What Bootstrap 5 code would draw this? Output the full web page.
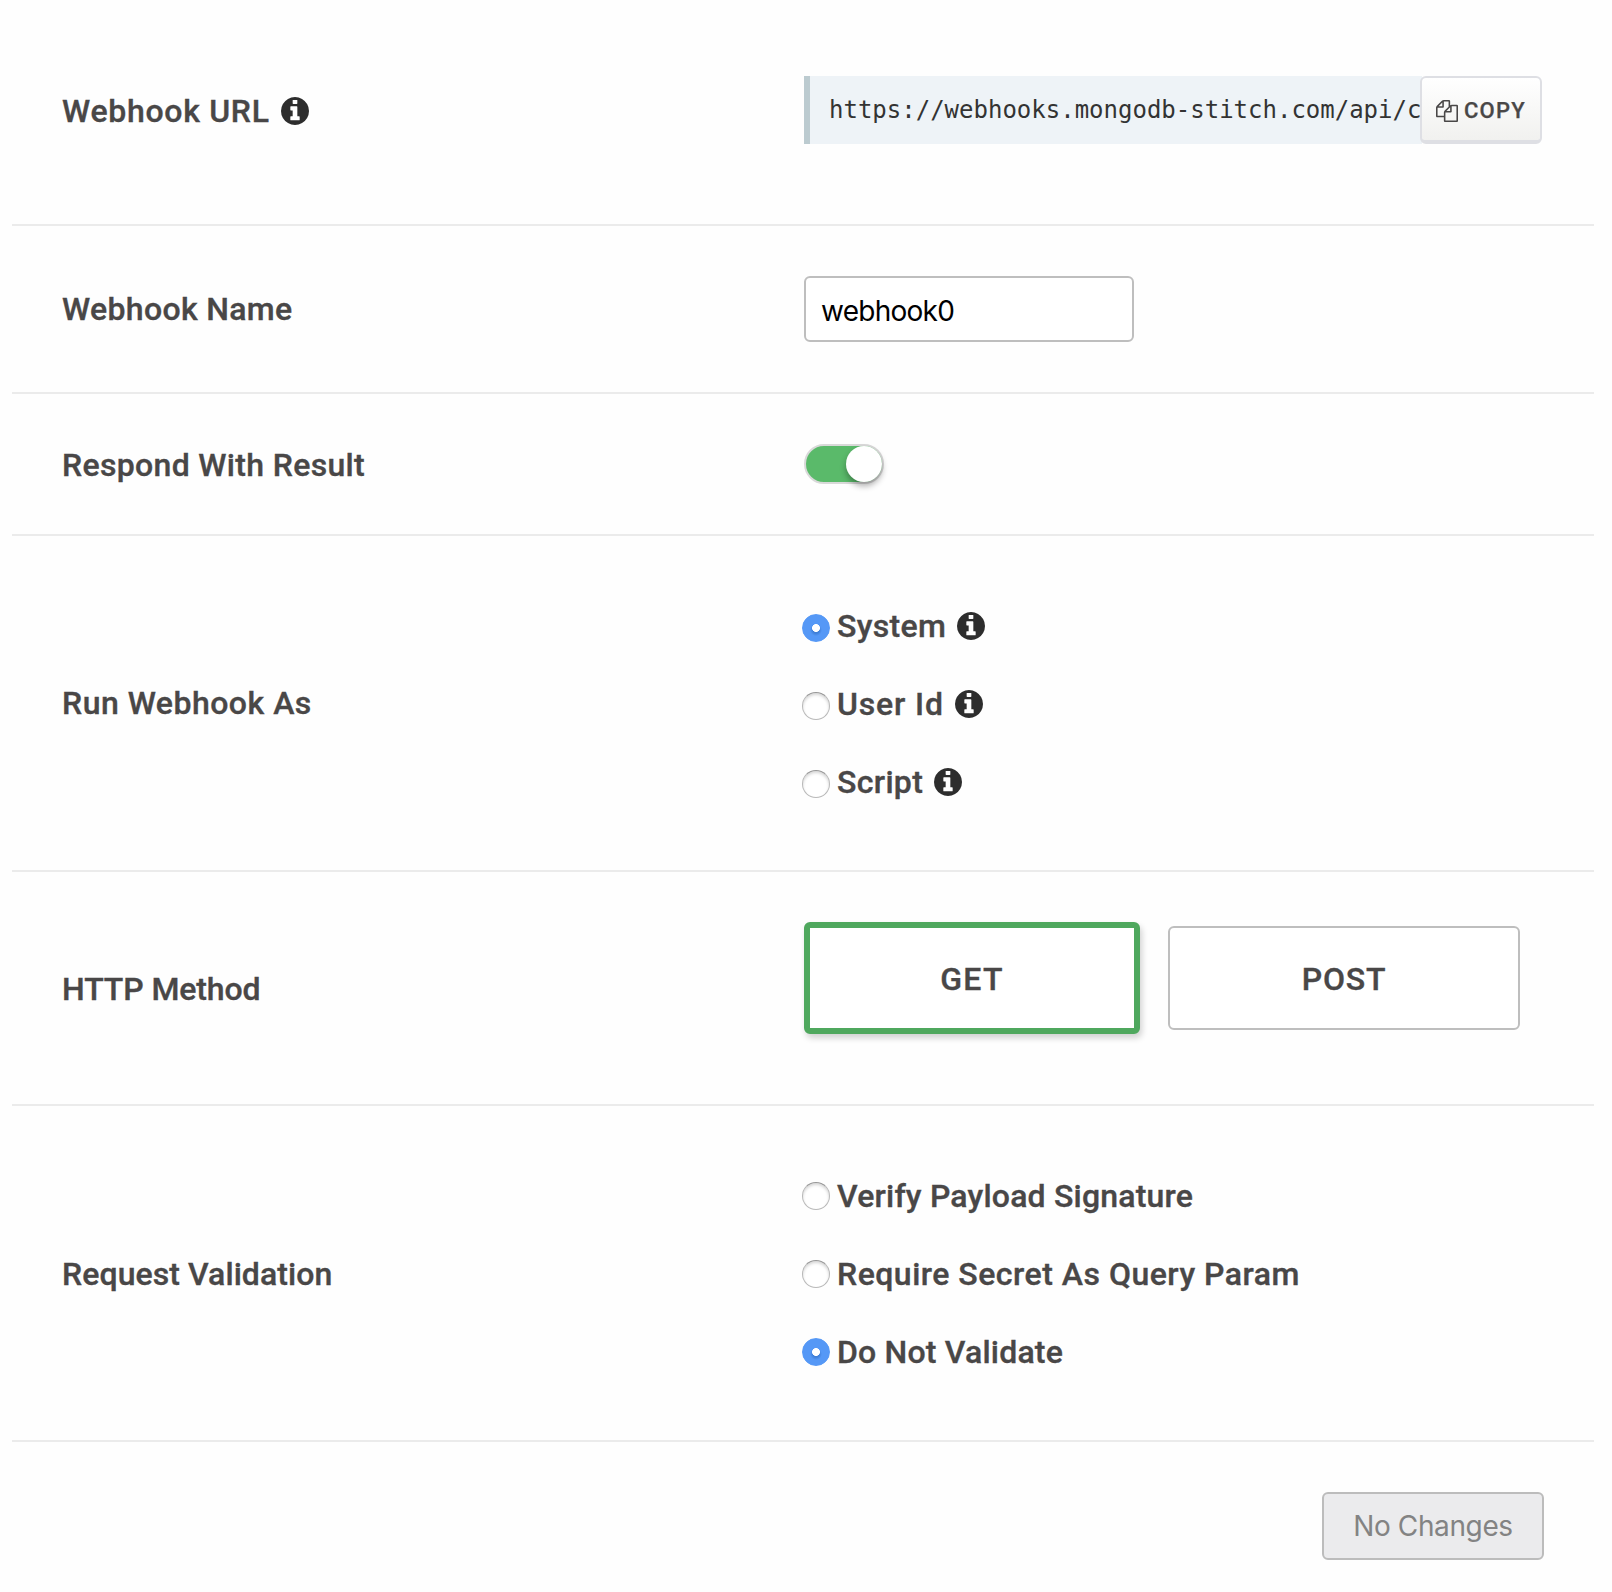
<!DOCTYPE html>
<html lang="en">
<head>
<meta charset="utf-8">
<meta name="viewport" content="width=device-width, initial-scale=1">
<title>Webhook Settings</title>
<link href="https://cdn.jsdelivr.net/npm/bootstrap@5.3.0/dist/css/bootstrap.min.css" rel="stylesheet">
<style>
body{background:#fefefe;color:#494747;font-family:Roboto,"Liberation Sans",sans-serif;}
.settings{width:1582px;margin-left:12px;padding-top:26px;}
.setting{padding:50px 50px;border-bottom:2px solid #ebebeb;}
.setting-label{width:742px;flex:none;padding-top:2px;}
.strong-text{font-size:32px;line-height:32px;font-weight:500;-webkit-text-stroke:.35px currentColor;white-space:nowrap;}
.ls-0{letter-spacing:.08px}.ls-2{letter-spacing:.2px}.ls-3{letter-spacing:.33px}.ls-5{letter-spacing:.49px}.ls-7{letter-spacing:.71px}.ls-8{letter-spacing:.85px}.ls-n1{letter-spacing:-.1px}
.url-row{padding-bottom:80px}
.url-box{width:618px;height:68px;background:#eef3f7;border-left:6px solid #bccbd0;padding-left:19px;overflow:hidden;white-space:nowrap;font:24px/68px "DejaVu Sans Mono",monospace;color:#333;}
.btn-copy{width:122px;height:68px;margin-left:-2px;border:2px solid #dedfe4;border-bottom-width:4px;border-radius:6px;background:linear-gradient(#fff,#f1f1ef);color:#494747;font-size:22px;line-height:22px;font-weight:500;-webkit-text-stroke:.25px currentColor;letter-spacing:1.2px;gap:6px;padding:3px 0 0 14px;}
.info-icon{width:28px;height:28px;fill:#2d2d2d;flex:none;margin-left:11px}
.name-input.form-control{width:330px;height:66px;border:2px solid #bebebe;border-radius:6px;padding:3px 15px 0;color:#000;font:28px Inter,sans-serif;letter-spacing:-.75px;background:#fff}
.toggle-track{width:80px;height:40px;border:2px solid #d9d9d9;border-radius:20px;background:#5aba6a;}
.toggle-knob{width:36px;height:36px;border-radius:50%;background:#fff;box-shadow:0 4px 6px rgba(0,0,0,.32)}
.choice{height:78px;padding-top:1px}
.choice .form-check-input{width:28px;height:28px;margin:0 7px 0 -2px;flex:none;border:1px solid #b9b9b9;border-top-color:#969696;background-color:#fff;box-shadow:inset 0 2px 3px rgba(0,0,0,.16);}
.choice .form-check-input:checked{border-color:#5598f6;background:radial-gradient(circle at 50% 50%,#fff 0 3.6px,rgba(255,255,255,0) 4.3px),radial-gradient(circle at 50% 58%,#3f7fd8 0 3px,#5598f6 6px);box-shadow:none}
.choice .form-check-input{margin-top:1px}
.run-as .form-check-input{margin-top:5px}
.run-as .setting-label,.name-row .setting-label{padding-top:0}
.methods{height:132px;gap:28px}
.method{width:352px;height:104px;margin-top:4px;border:2px solid #bebebe;border-radius:6px;background:#fff;padding-top:2px}
.method.chosen{width:336px;height:112px;margin-top:0;border:6px solid #4fa85e;box-shadow:2px 4px 6px rgba(0,0,0,.18);letter-spacing:1.3px}
.form-actions{padding:50px 50px 0}
.btn-save,.btn-save:disabled{width:222px;height:68px;border:2px solid #bcbcbc;border-radius:6px;background:#ebebed;color:#838383;font:28px Inter,sans-serif;letter-spacing:-.38px;opacity:1;padding:0}
</style>
<script src="https://cdn.jsdelivr.net/npm/bootstrap@5.3.0/dist/js/bootstrap.bundle.min.js"></script>
</head>
<body>
<svg class="d-none">
<symbol id="info" viewBox="0 128 1536 1536"><path d="M1024 1376v-160q0-14-9-23t-23-9h-96v-512q0-14-9-23t-23-9h-320q-14 0-23 9t-9 23v160q0 14 9 23t23 9h96v320h-96q-14 0-23 9t-9 23v160q0 14 9 23t23 9h448q14 0 23-9t9-23zm-128-896v-160q0-14-9-23t-23-9h-192q-14 0-23 9t-9 23v160q0 14 9 23t23 9h192q14 0 23-9t9-23zm640 416q0 209-103 385.5t-279.5 279.5-385.5 103-385.5-103-279.5-279.5-103-385.5 103-385.5 279.5-279.5 385.5-103 385.5 103 279.5 279.5 103 385.5z"/></symbol>
</svg>
<form class="settings">
  <div class="setting url-row d-flex align-items-center">
    <div class="setting-label strong-text ls-7 d-flex align-items-center">Webhook URL<svg class="info-icon"><use href="#info"/></svg></div>
    <div class="d-flex">
      <div class="url-box">https://webhooks.mongodb-stitch.com/api/c</div>
      <button type="button" class="btn btn-copy d-flex align-items-center">
        <svg width="22" height="22" viewBox="0 0 1792 1792" fill="currentColor"><path d="M1696 384q40 0 68 28t28 68v1216q0 40-28 68t-68 28h-960q-40 0-68-28t-28-68v-288h-544q-40 0-68-28t-28-68v-672q0-40 20-88t48-76l408-408q28-28 76-48t88-20h416q40 0 68 28t28 68v328q68-40 128-40h416zm-544 213l-299 299h299v-299zm-640-384l-299 299h299v-299zm196 647l316-316v-416h-384v416q0 40-28 68t-68 28h-416v640h512v-256q0-40 20-88t48-76zm956 804v-1152h-384v416q0 40-28 68t-68 28h-416v640h896z"/></svg><span>COPY</span>
      </button>
    </div>
  </div>
  <div class="setting name-row d-flex align-items-center">
    <label class="setting-label strong-text ls-3" for="name">Webhook Name</label>
    <input id="name" class="form-control name-input" value="webhook0">
  </div>
  <div class="setting d-flex align-items-center">
    <div class="setting-label strong-text ls-3">Respond With Result</div>
    <div class="toggle-track d-flex justify-content-end"><div class="toggle-knob"></div></div>
  </div>
  <div class="setting run-as d-flex align-items-center">
    <div class="setting-label strong-text ls-5">Run Webhook As</div>
    <div>
      <label class="choice strong-text ls-3 d-flex align-items-center"><input class="form-check-input" type="radio" name="run" checked>System<svg class="info-icon"><use href="#info"/></svg></label>
      <label class="choice strong-text ls-8 d-flex align-items-center"><input class="form-check-input" type="radio" name="run">User Id<svg class="info-icon"><use href="#info"/></svg></label>
      <label class="choice strong-text ls-3 d-flex align-items-center"><input class="form-check-input" type="radio" name="run">Script<svg class="info-icon"><use href="#info"/></svg></label>
    </div>
  </div>
  <div class="setting d-flex align-items-center">
    <div class="setting-label strong-text ls-n1">HTTP Method</div>
    <div class="methods d-flex align-items-start">
      <div class="method chosen strong-text d-flex align-items-center justify-content-center">GET</div>
      <div class="method strong-text ls-8 d-flex align-items-center justify-content-center">POST</div>
    </div>
  </div>
  <div class="setting d-flex align-items-center">
    <div class="setting-label strong-text ls-0">Request Validation</div>
    <div>
      <label class="choice strong-text ls-2 d-flex align-items-center"><input class="form-check-input" type="radio" name="val">Verify Payload Signature</label>
      <label class="choice strong-text ls-5 d-flex align-items-center"><input class="form-check-input" type="radio" name="val">Require Secret As Query Param</label>
      <label class="choice strong-text ls-2 d-flex align-items-center"><input class="form-check-input" type="radio" name="val" checked>Do Not Validate</label>
    </div>
  </div>
  <div class="form-actions d-flex justify-content-end">
    <button type="button" class="btn btn-save" disabled>No Changes</button>
  </div>
</form>
</body>
</html>
